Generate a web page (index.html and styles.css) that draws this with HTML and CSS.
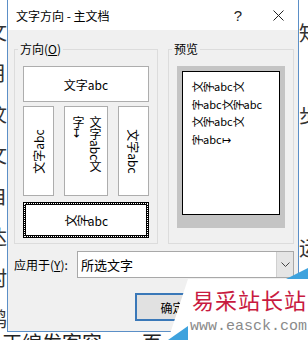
FILE: index.html
```html
<!DOCTYPE html>
<html lang="zh-CN">
<head>
  <meta charset="UTF-8">
  <title>文字方向 - 主文档</title>
  <link rel="stylesheet" href="styles.css">
</head>
<body>
  <div class="screen">
    <div class="doc-left">
      <div>文</div><div>月</div><div>汶</div><div>文</div><div>自</div><div>达</div><div>村</div><div>鹅</div>
    </div>
    <div class="dialog">
      <div class="titlebar">
        <span class="title">文字方向 - 主文档</span>
        <span class="help">?</span>
        <span class="close">
          <svg width="11" height="11" viewBox="0 0 11 11"><path d="M0.5 0.5L10.5 10.5M10.5 0.5L0.5 10.5" stroke="#222" stroke-width="1"/></svg>
        </span>
      </div>
      <div class="body">
        <div class="groups">
          <div class="group dir">
            <span class="group-title">方向(<u>O</u>)</span>
            <div class="opt wide">文字abc</div>
            <div class="opt-row">
              <div class="opt tall"><span class="rot-l">文字abc</span></div>
              <div class="opt tall mid"><div class="stack">文字abc文<br>字↦</div></div>
              <div class="opt tall"><span class="rot-r">文字abc</span></div>
            </div>
            <div class="opt wide sel"><span class="r">文</span><span class="r">字</span>abc</div>
          </div>
          <div class="group preview">
            <span class="group-title">预览</span>
            <div class="frame">
              <div class="page">
                <div><span class="r">文</span><span class="r">字</span>abc<span class="r">文</span></div>
                <div><span class="r">字</span>abc<span class="r">文</span><span class="r">字</span>abc</div>
                <div><span class="r">文</span><span class="r">字</span>abc<span class="r">文</span></div>
                <div><span class="r">字</span>abc↦</div>
              </div>
            </div>
          </div>
        </div>
        <div class="apply">
          <label>应用于(<u>Y</u>):</label>
          <div class="select">
            <span class="value">所选文字</span>
            <span class="arrow">
              <svg width="9" height="6" viewBox="0 0 9 6"><path d="M0.5 0.5L4.5 4.5L8.5 0.5" fill="none" stroke="#444" stroke-width="1"/></svg>
            </span>
          </div>
        </div>
        <div class="buttons">
          <button class="btn default">确定</button>
        </div>
      </div>
    </div>
    <div class="doc-right">
      <div>知</div><div class="gap1">步</div><div class="gap2">运</div>
    </div>
    <div class="doc-bottom">正编发客容　一页　插</div>
  </div>
  <div class="watermark">
    <div class="wm-body">
      <div class="wm-cn">易采站长站</div>
      <div class="wm-url">www.easck.com</div>
    </div>
  </div>
</body>
</html>
```
FILE: styles.css
```css
* { box-sizing: border-box; }
body { margin: 0; background: #fff; font-family: "Noto Sans CJK SC", "Noto Sans", sans-serif; overflow: hidden; }
.screen { display: grid; grid-template-columns: 7px 292px 9px; grid-template-rows: 332px 8px; width: 308px; height: 340px; overflow: hidden; }

.doc-left { overflow: hidden; padding-top: 11px; font-size: 20px; line-height: 41px; color: #333; }
.doc-left div { margin-left: -13px; white-space: nowrap; }
.doc-right { overflow: hidden; padding-top: 13px; font-size: 20px; line-height: 40px; color: #333; }
.doc-right .gap1 { margin-top: 42px; }
.doc-right .gap2 { margin-top: 93px; }
.doc-bottom { grid-column: 1 / -1; width: 168px; overflow: hidden; padding-left: 2px; font-size: 20px; line-height: 22px; color: #222; white-space: nowrap; }

.dialog { display: flex; flex-direction: column; background: #f0f0f0; border: 1px solid #5b8fc7; border-top: none; font-size: 12px; color: #000; }
.titlebar { height: 30px; flex-shrink: 0; display: flex; align-items: center; padding-left: 8px; background: #fff; }
.title { flex: 1; }
.help { width: 40px; text-align: center; font-family: "Liberation Sans", sans-serif; font-size: 15px; color: #222; }
.close { width: 40px; display: flex; justify-content: center; }

.body { flex: 1; padding: 19px 4px 0 6px; }
.groups { display: flex; gap: 10px; }
.group { display: flex; flex-direction: column; border: 1px solid #dcdcdc; padding: 0 8px 5px; }
.dir { width: 144px; }
.preview { width: 126px; }
.group-title { align-self: flex-start; margin: -9px 0 9px -5px; padding: 0 2px; line-height: 16px; background: #f0f0f0; }

.opt { display: flex; align-items: center; justify-content: center; background: #fff; border: 1px solid #adadad; }
.wide { height: 36px; }
.opt-row { display: flex; gap: 10px; margin: 4px 0 6px; }
.tall { width: 31px; height: 90px; }
.tall.mid { width: 44px; align-items: flex-start; justify-content: flex-end; }
.rot-l, .rot-r { flex-shrink: 0; white-space: nowrap; }
.rot-l { transform: rotate(-90deg); }
.rot-r { transform: rotate(90deg); }
.stack { writing-mode: vertical-rl; line-height: 17px; padding: 9px 3px 0 0; white-space: nowrap; }
.sel { border: 3px solid #000; outline: 1px dotted #fff; outline-offset: -2px; }
.r { display: inline-block; transform: rotate(-90deg); }

.frame { height: 162px; padding: 5px 5px 13px; background: #c4c4c4; }
.page { height: 100%; padding: 6px 0 0 9px; background: #fff; border: 1px solid #000; font-size: 11px; line-height: 17.7px; white-space: nowrap; }

.apply { display: flex; align-items: center; margin-top: 7px; }
.apply label { width: 63px; }
.select { flex: 1; height: 27px; display: flex; align-items: center; background: #fff; border: 1px solid #a8a8a8; }
.select .value { flex: 1; padding-left: 3px; font-size: 13px; }
.select .arrow { width: 17px; align-self: stretch; display: flex; align-items: center; justify-content: center; background: #e5e5e5; border-left: 1px solid #d0d0d0; }

.buttons { display: flex; margin-top: 15px; padding-left: 121px; }
.btn { width: 75px; height: 28px; background: #e1e1e1; border: 1px solid #adadad; font: inherit; color: #000; padding: 0; }
.btn.default { border: 2px solid #3a78b8; }

/* site watermark pasted over the corner */
.watermark { position: absolute; left: 168px; top: 279px; width: 140px; height: 61px; }
.wm-body { height: 100%; padding: 8px 0 0 24px; background: #fff; white-space: nowrap; clip-path: polygon(20px 0, 100% 0, 100% 100%, 0 100%); }
.watermark::before, .watermark::after { content: ""; position: absolute; background: #3ea2dd; clip-path: polygon(0 100%, 100% 0, 100% 100%); }
.watermark::before { right: 0; top: -11px; width: 22px; height: 11px; }
.watermark::after { left: 0; bottom: 0; width: 20px; height: 14px; }
.wm-cn { font-size: 22px; line-height: 24px; letter-spacing: 1px; color: #c81a40; }
.wm-url { margin: 8px 0 0 -2px; font-family: "Liberation Mono", monospace; font-size: 15px; line-height: 16px; color: #8a8a8a; }
```
